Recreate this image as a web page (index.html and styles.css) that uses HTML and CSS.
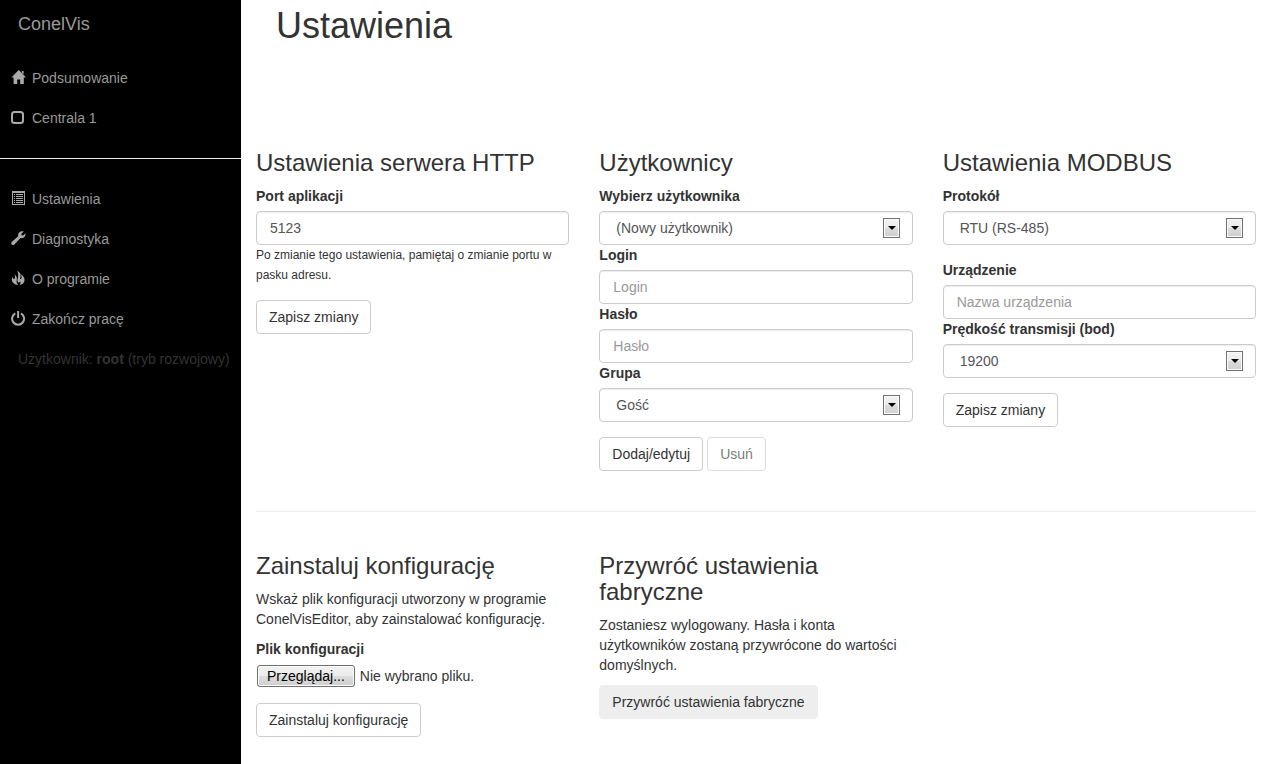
FILE: index.html
```html
<!DOCTYPE html>
<html lang="pl">
<head>
  <meta charset="UTF-8">
  <title>ConelVis - Ustawienia</title>
  <link rel="stylesheet" href="styles.css">
</head>
<body>
  <nav class="sidebar">
    <a class="brand" href="#">ConelVis</a>
    <ul class="menu">
      <li><a href="#">
        <svg class="icon" viewBox="0 0 15 16"><path d="M7.7 0 L15 7.6 H12.8 V14 H9.2 V9.5 H6.2 V14 H2.6 V7.6 H.4 Z M10.8 1 H12.6 V4.5 L10.8 2.8 Z"/></svg>
        Podsumowanie</a></li>
      <li><a href="#">
        <svg class="icon" viewBox="0 0 15 16"><rect class="line" x="1" y="2" width="11" height="11" rx="2.5"/></svg>
        Centrala 1</a></li>
    </ul>
    <hr>
    <ul class="menu">
      <li><a href="#">
        <svg class="icon" viewBox="0 0 15 16"><path fill-rule="evenodd" d="M1 0 H14 V14 H1 Z M2 2 V13 H13 V2 Z M3 3 H4 V4 H3 Z M5 3 H12 V4 H5 Z M3 5 H4 V6 H3 Z M5 5 H12 V6 H5 Z M3 7 H4 V8 H3 Z M5 7 H12 V8 H5 Z M3 9 H4 V10 H3 Z M5 9 H12 V10 H5 Z M3 11 H4 V12 H3 Z M5 11 H12 V12 H5 Z"/></svg>
        Ustawienia</a></li>
      <li><a href="#">
        <svg class="icon" viewBox="0 0 15 16"><path d="M12.8 .5 L10.3 2.8 L10.6 4.3 L12.1 4.6 L14.5 2.3 C14.9 5.6 12.3 7.8 9.4 7 L3.4 13.4 C1.5 15 -.8 12.8 .7 10.9 L7.2 5.3 C6.4 2.4 9.2 -.8 12.8 .5 Z"/></svg>
        Diagnostyka</a></li>
      <li><a href="#">
        <svg class="icon" viewBox="0 0 15 16"><path d="M6.2 0 C9.6 1.2 10.2 4.2 9.2 6.8 C8.9 8 9.6 8.6 10.2 7.8 C10.9 6.8 10.6 5 9.7 3.6 C12.4 4.6 13.9 7.4 13.5 9.8 C13 12.4 11.1 13.7 8.4 14 C9.7 12.6 9.9 11.6 9.2 10.4 C8.6 11.6 7.6 11.8 6.9 10.9 C6 9.7 6.6 8.2 7 6.5 C7.4 3.7 7.4 1.9 6.2 0 Z M3.6 3.6 C5.8 5.1 6.2 7.3 5.7 9.3 C5.3 11 5.9 12.6 7.2 14 C3.4 13.6 1 11.7 .8 8.8 C.7 7.5 1.2 6.6 1.9 5.9 C2 7 2.3 8.1 3.2 8 C4.3 7.6 4.2 5.6 3.6 3.6 Z"/></svg>
        O programie</a></li>
      <li><a href="#">
        <svg class="icon" viewBox="0 0 15 16"><path class="line" d="M4.3 2.4 A6 6 0 1 0 9.9 2.4"/><path class="line" d="M7.1 0 V7"/></svg>
        Zakończ pracę</a></li>
    </ul>
    <p class="user">Użytkownik: <strong>root</strong> (tryb rozwojowy)</p>
  </nav>

  <main class="content">
    <h1>Ustawienia</h1>

    <div class="row">
      <form>
        <h2>Ustawienia serwera HTTP</h2>
        <div class="form-group">
          <label for="port">Port aplikacji</label>
          <input class="form-control" type="text" id="port" value="5123">
          <small class="help">Po zmianie tego ustawienia, pamiętaj o zmianie portu w pasku adresu.</small>
        </div>
        <button class="btn" type="button">Zapisz zmiany</button>
      </form>

      <form>
        <h2>Użytkownicy</h2>
        <div class="form-group">
          <label for="user">Wybierz użytkownika</label>
          <div class="select">
            <select class="form-control" id="user"><option>(Nowy użytkownik)</option></select>
          </div>
          <label for="login">Login</label>
          <input class="form-control" type="text" id="login" placeholder="Login">
          <label for="password">Hasło</label>
          <input class="form-control" type="password" id="password" placeholder="Hasło">
          <label for="group">Grupa</label>
          <div class="select">
            <select class="form-control" id="group"><option>Gość</option></select>
          </div>
        </div>
        <div class="buttons">
          <button class="btn" type="button">Dodaj/edytuj</button>
          <button class="btn" type="button" disabled>Usuń</button>
        </div>
      </form>

      <form>
        <h2>Ustawienia MODBUS</h2>
        <div class="form-group">
          <label for="protocol">Protokół</label>
          <div class="select">
            <select class="form-control" id="protocol"><option>RTU (RS-485)</option></select>
          </div>
        </div>
        <div class="form-group">
          <label for="device">Urządzenie</label>
          <input class="form-control" type="text" id="device" placeholder="Nazwa urządzenia">
          <label for="baud">Prędkość transmisji (bod)</label>
          <div class="select">
            <select class="form-control" id="baud"><option>19200</option></select>
          </div>
        </div>
        <button class="btn" type="button">Zapisz zmiany</button>
      </form>
    </div>

    <hr>

    <div class="row">
      <form>
        <h2>Zainstaluj konfigurację</h2>
        <p>Wskaż plik konfiguracji utworzony w programie ConelVisEditor, aby zainstalować konfigurację.</p>
        <div class="form-group">
          <label for="browse">Plik konfiguracji</label>
          <div class="file">
            <input type="file" id="config" hidden>
            <button class="browse" type="button" id="browse" onclick="document.getElementById('config').click()">Przeglądaj...</button>
            <span>Nie wybrano pliku.</span>
          </div>
        </div>
        <button class="btn" type="button">Zainstaluj konfigurację</button>
      </form>

      <form>
        <h2>Przywróć ustawienia fabryczne</h2>
        <p>Zostaniesz wylogowany. Hasła i konta użytkowników zostaną przywrócone do wartości domyślnych.</p>
        <button class="btn btn-reset" type="button">Przywróć ustawienia fabryczne</button>
      </form>
    </div>
  </main>
</body>
</html>
```

FILE: styles.css
```css
*, *::before, *::after { box-sizing: border-box; }

body {
  display: grid;
  grid-template-columns: 241px 1fr;
  min-height: 100vh;
  margin: 0;
  background: #fff;
  color: #333;
  font: 14px/20px "Liberation Sans", Arial, sans-serif;
}

/* sidebar */
.sidebar { background: #000; color: #999; }
.brand { display: block; padding: 14px 18px 24px; color: #999; font-size: 18px; text-decoration: none; }
.menu { margin: 0; padding: 0; list-style: none; }
.menu a { display: flex; align-items: center; gap: 6px; padding: 10px 11px; color: #999; text-decoration: none; }
.sidebar hr { margin: 20px 0; border: 0; border-top: 1px solid #eee; }
.user { margin: 0; padding: 10px 0 10px 18px; color: #333; white-space: nowrap; }
.icon { width: 15px; height: 16px; fill: #aaa; }
.icon .line { fill: none; stroke: #aaa; stroke-width: 2; }

/* content */
.content { padding: 6px 9px 20px 15px; }
h1, h2 { font-weight: normal; }
h1 { margin: 0 0 104px 20px; font-size: 36px; line-height: 40px; }
h2 { margin: 0 0 10px; font-size: 24px; line-height: 26px; }
p { margin: 0 0 10px; }
.row { display: grid; grid-template-columns: repeat(3, 1fr); gap: 30px; }
.content hr { margin: 40px 0 41px; border: 0; border-top: 1px solid #eee; }

/* forms */
.form-group { margin-bottom: 15px; }
label { display: block; margin-bottom: 5px; font-weight: bold; }
.form-control {
  display: block;
  width: 100%;
  height: 34px;
  padding: 6px 13px;
  border: 1px solid #ccc;
  border-radius: 4px;
  background: #fff;
  box-shadow: inset 0 1px 1px rgba(0, 0, 0, .075);
  color: #555;
  font: inherit;
}
.form-control::placeholder { color: #999; opacity: 1; }
.help { display: block; font-size: 12px; }

.select { position: relative; }
.select select { padding: 6px 16px; appearance: none; }
.select::before {
  content: "";
  position: absolute;
  top: 7px;
  right: 13px;
  width: 17px;
  height: 20px;
  border: 1px solid #707070;
  background: linear-gradient(#f2f2f2, #ebebeb 50%, #ddd 50%, #cfcfcf);
  box-shadow: inset 0 0 0 1px #fcfcfc;
  pointer-events: none;
}
.select::after {
  content: "";
  position: absolute;
  top: 15px;
  right: 17px;
  border: 4px solid transparent;
  border-top-color: #000;
  border-bottom: 0;
  pointer-events: none;
}

.buttons { display: flex; gap: 4px; }
.btn {
  height: 34px;
  padding: 6px 12px;
  border: 1px solid #ccc;
  border-radius: 4px;
  background: #fff;
  color: #333;
  font: inherit;
}
.btn:disabled { opacity: .65; }
.btn-reset { border-color: #eee; background: #eee; }

.file { display: flex; align-items: center; gap: 5px; height: 24px; }
.browse {
  height: 22px;
  margin-left: 1px;
  padding: 0 9px;
  border: 1px solid #707070;
  border-radius: 3px;
  background: linear-gradient(#f2f2f2, #ebebeb 50%, #ddd 50%, #cfcfcf);
  box-shadow: inset 0 0 0 1px #fcfcfc;
  color: #000;
  font: inherit;
}
```
